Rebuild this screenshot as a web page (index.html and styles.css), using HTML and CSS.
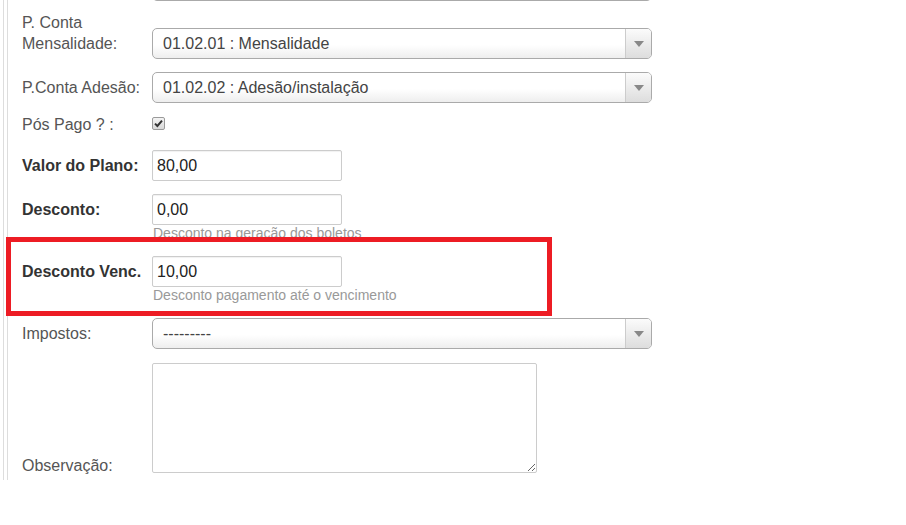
FILE: index.html
```
<html>
	<head>
		<meta charset="utf-8" />
		<title>Plano</title>
		<link rel="stylesheet" href="styles.css">
	</head>
	<body>
		<div class="frame">
			<div class="panel">
				<!-- fim do select anterior, cortado no topo -->
				<div class="prev"></div>

				<div class="row row-tall">
					<div class="label">P. Conta<br>Mensalidade:</div>
					<div class="select">
						<span class="select-text">01.02.01 : Mensalidade</span>
						<span class="select-arrow"><b></b></span>
					</div>
				</div>

				<div class="row">
					<div class="label">P.Conta Adesão:</div>
					<div class="select">
						<span class="select-text">01.02.02 : Adesão/instalação</span>
						<span class="select-arrow"><b></b></span>
					</div>
				</div>

				<div class="row row-check">
					<div class="label label-short">Pós Pago ? :</div>
					<div class="check">
						<svg width="9" height="9" viewBox="0 0 9 9"><path d="M1 4.6 L3.4 7 L8 1.6" fill="none" stroke="#333" stroke-width="2"/></svg>
					</div>
				</div>

				<div class="row row-input">
					<div class="label label-bold">Valor do Plano:</div>
					<div class="field">
						<input class="input" type="text" value="80,00">
					</div>
				</div>

				<div class="row row-input">
					<div class="label label-bold">Desconto:</div>
					<div class="field">
						<input class="input" type="text" value="0,00">
						<div class="help">Desconto na geração dos boletos</div>
					</div>
				</div>

				<div class="row row-input">
					<div class="label label-bold">Desconto Venc.</div>
					<div class="field">
						<input class="input" type="text" value="10,00">
						<div class="help">Desconto pagamento até o vencimento</div>
					</div>
				</div>

				<div class="row row-taxes">
					<div class="label">Impostos:</div>
					<div class="select">
						<span class="select-text">---------</span>
						<span class="select-arrow"><b></b></span>
					</div>
				</div>

				<div class="row row-area">
					<div class="label label-bottom">Observação:</div>
					<textarea class="area"></textarea>
				</div>

				<!-- marcação vermelha por cima do formulário -->
				<div class="highlight"></div>
			</div>
		</div>
	</body>
</html>
```
FILE: styles.css
```
body{
	margin: 0;
	background: #ffffff;
	font-family: "Liberation Sans", Arial, sans-serif;
	font-size: 16px;
	color: #555555;
}
.frame{
	height: 480px;
	margin-left: 3px;
	padding-left: 3px;
	border-left: 1px solid #dddddd;
}
.panel{
	position: relative;
	display: flex;
	flex-direction: column;
	height: 100%;
	padding-left: 14px;
	border-left: 1px solid #dddddd;
}
.prev{
	box-sizing: border-box;
	width: 500px;
	height: 31px;
	margin-top: -30px;
	margin-left: 130px;
	border: 1px solid #aaaaaa;
	border-radius: 5px;
}

.row{
	display: flex;
	align-items: center;
	margin-top: 13px;
}
.row-tall{
	align-items: flex-end;
	margin-top: 11px;
}
.row-check{
	align-items: flex-start;
	margin-top: 12px;
}
.row-input{
	align-items: flex-start;
	margin-top: 15px;
}
.row-input + .row-input{
	margin-top: 13px;
}
.row-input + .row-input + .row-input{
	margin-top: 15px;
}
.row-taxes{
	margin-top: 15px;
}
.row-area{
	align-items: flex-end;
	margin-top: 14px;
}

.label{
	width: 130px;
	flex: none;
	line-height: 21px;
}
.row-tall .label{
	padding-bottom: 5px;
}
.label-short{
	line-height: 20px;
}
.label-bold{
	font-weight: bold;
	color: #333333;
	line-height: 31px;
}
.label-bottom{
	line-height: 20px;
	margin-bottom: -3px;
}

/* select com a setinha do lado direito */
.select{
	box-sizing: border-box;
	display: flex;
	width: 500px;
	height: 31px;
	border: 1px solid #aaaaaa;
	border-radius: 5px;
	background: linear-gradient(#ffffff 0%, #ffffff 55%, #eeeeee 100%);
	overflow: hidden;
}
.select-text{
	flex: 1;
	padding-left: 10px;
	line-height: 29px;
	color: #444444;
}
.select-arrow{
	display: flex;
	align-items: center;
	justify-content: center;
	width: 25px;
	border-left: 1px solid #cccccc;
	background: linear-gradient(#fbfbfb, #dddddd);
}
.select-arrow b{
	width: 0;
	height: 0;
	border-top: 6px solid #888888;
	border-left: 5px solid transparent;
	border-right: 5px solid transparent;
}

.check{
	box-sizing: border-box;
	display: flex;
	align-items: center;
	justify-content: center;
	width: 13px;
	height: 13px;
	margin-top: 2px;
	border: 1px solid #9a9a9a;
	border-radius: 2px;
	background: linear-gradient(#f4f4f4, #d8d8d8);
}

.field{
	display: flex;
	flex-direction: column;
}
.input{
	box-sizing: border-box;
	width: 190px;
	height: 31px;
	margin: 0;
	padding: 0 4px;
	border: 1px solid #cccccc;
	border-radius: 2px;
	box-shadow: inset 0 1px 1px rgba(0,0,0,0.06);
	font-family: "Liberation Sans", Arial, sans-serif;
	font-size: 16px;
	color: #222222;
}
.help{
	padding-left: 1px;
	font-size: 14px;
	line-height: 16px;
	color: #999999;
}
.area{
	box-sizing: border-box;
	width: 385px;
	height: 110px;
	margin: 0;
	border: 1px solid #cccccc;
	border-radius: 2px;
}

.highlight{
	position: absolute;
	left: -2px;
	top: 237px;
	box-sizing: border-box;
	width: 546px;
	height: 79px;
	border: 5px solid #ed1c24;
}
```
